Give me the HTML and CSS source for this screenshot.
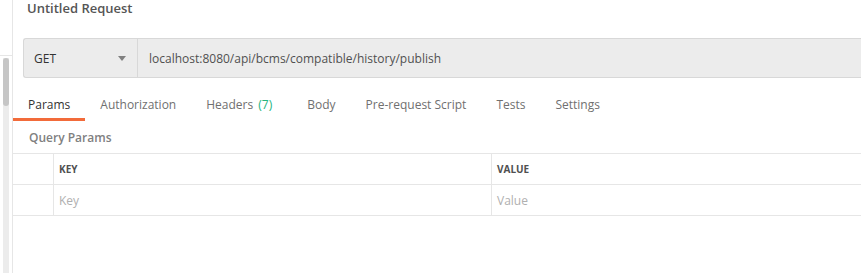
FILE: index.html
```html
<!DOCTYPE html>
<html lang="en">
<head>
    <meta charset="UTF-8">
    <title>Untitled Request</title>
    <link rel="stylesheet" href="styles.css">
</head>
<body>

<div class="app">
    <div class="sidebar">
        <div class="sidebar-top"></div>
        <div class="scroll-track">
            <div class="scroll-thumb"></div>
        </div>
    </div>

    <div class="main">
        <h1 class="title">Untitled Request</h1>

        <div class="url-bar">
            <div class="method">
                <span>GET</span>
                <svg class="caret" width="8" height="5" viewBox="0 0 8 5"><path d="M0 0h8L4 5z" fill="#808080"/></svg>
            </div>
            <div class="url">localhost:8080/api/bcms/compatible/history/publish</div>
        </div>

        <ul class="tabs">
            <li class="active">Params</li>
            <li>Authorization</li>
            <li>Headers <span class="count">(7)</span></li>
            <li>Body</li>
            <li>Pre-request Script</li>
            <li>Tests</li>
            <li>Settings</li>
        </ul>

        <div class="section-title">Query Params</div>

        <table class="params">
            <tr class="head">
                <td class="check"></td>
                <td class="key">KEY</td>
                <td>VALUE</td>
            </tr>
            <tr class="row">
                <td class="check"></td>
                <td class="key placeholder">Key</td>
                <td class="placeholder">Value</td>
            </tr>
        </table>
    </div>
</div>

</body>
</html>
```

FILE: styles.css
```css
body {
    margin: 0;
    font-family: "Open Sans", Arial, sans-serif;
    background-color: #fff;
    color: #505050;
    overflow: hidden;
}
.app {
    display: flex;
    height: 273px;
}
.sidebar {
    width: 12px;
    flex-shrink: 0;
    border-right: 1px solid #e6e6e6;
    display: flex;
    flex-direction: column;
}
.sidebar-top {
    height: 55px;
    border-bottom: 1px solid #e6e6e6;
}
.scroll-track {
    flex: 1;
    margin: 2px 3px 0 3px;
    background-color: #ececec;
}
.scroll-thumb {
    height: 48px;
    background-color: #c6c6c6;
    border-radius: 3px;
}
.main {
    flex: 1;
    min-width: 0;
}
.title {
    margin: 0;
    padding-left: 14px;
    font-size: 13px;
    font-weight: 600;
    line-height: 16px;
    color: #555;
}
.url-bar {
    display: flex;
    height: 38px;
    margin: 22px 0 0 10px;
    background-color: #ececec;
    border: 1px solid #d8d8d8;
    border-right: none;
    border-radius: 3px 0 0 3px;
    font-size: 12px;
}
.method {
    width: 114px;
    display: flex;
    align-items: center;
    justify-content: space-between;
    padding: 0 10px 0 10px;
    box-sizing: border-box;
    border-right: 1px solid #d8d8d8;
    color: #333;
    font-size: 12px;
}
.caret {
    margin-right: 1px;
}
.url {
    display: flex;
    align-items: center;
    padding-left: 11px;
    color: #505050;
    white-space: nowrap;
}
.tabs {
    display: flex;
    list-style: none;
    margin: 17px 0 0 0;
    padding: 0;
    font-size: 12px;
}
.tabs li {
    padding: 0 15px;
    height: 23px;
    line-height: 20px;
    color: #707070;
    border-bottom: 3px solid transparent;
    white-space: nowrap;
}
.tabs li.active {
    color: #333;
    border-bottom-color: #f26b3a;
}
.tabs .count {
    margin-left: 2px;
    padding-right: 5px;
    color: #26b47f;
}
.section-title {
    padding: 8px 0 0 16px;
    height: 32px;
    box-sizing: border-box;
    font-size: 12px;
    font-weight: 600;
    color: #808080;
}
.params {
    width: 100%;
    border-collapse: collapse;
    font-size: 12px;
}
.params td {
    border-top: 1px solid #e6e6e6;
    border-bottom: 1px solid #e6e6e6;
    border-left: 1px solid #e6e6e6;
    padding: 0 0 0 5px;
    height: 30px;
}
.params td.check {
    width: 35px;
    border-left: none;
}
.params td.key {
    width: 432px;
}
.params .head td {
    font-size: 10px;
    font-weight: 700;
    color: #505050;
}
.params .placeholder {
    color: #b0b0b0;
}
```
